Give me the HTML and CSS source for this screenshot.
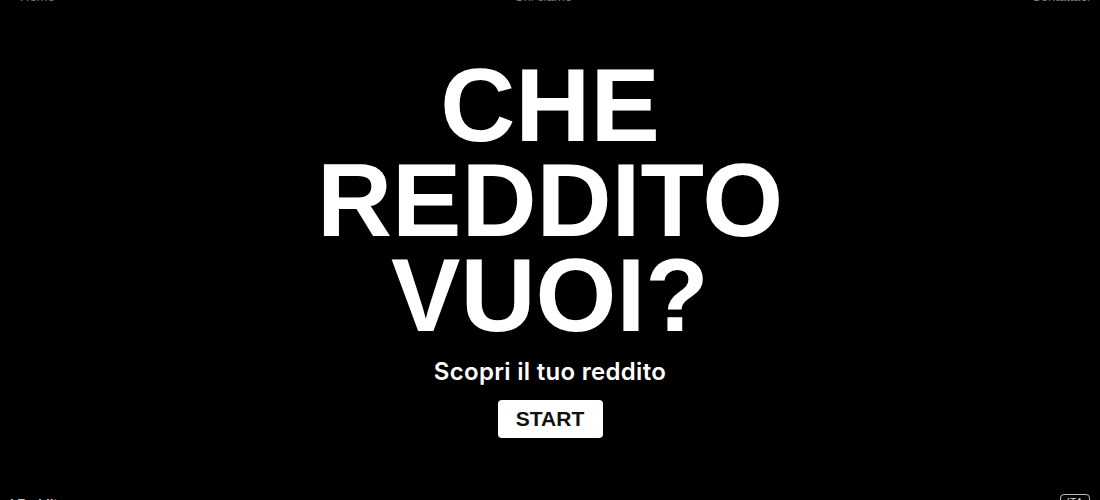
FILE: index.html
```html
<!DOCTYPE html>
<html lang="it">
<head>
<meta charset="utf-8">
<title>Che reddito vuoi?</title>
<link rel="stylesheet" href="styles.css">
</head>
<body>
<div class="page">
  <nav class="topnav">
    <a class="navlink">Home</a>
    <a class="navlink">Chi siamo</a>
    <a class="navlink">Contattaci</a>
  </nav>
  <main class="hero">
    <h1 class="title">CHE<br>REDDITO<br>VUOI?</h1>
    <p class="subtitle">Scopri il tuo reddito</p>
    <button class="start">START</button>
  </main>
  <footer class="foot">
    <span class="foot-text">I Reddito</span>
    <span class="foot-badge">ITA</span>
  </footer>
</div>
</body>
</html>
```

FILE: styles.css
```css
html, body {
  margin: 0;
  padding: 0;
  background: #000;
}
body {
  width: 1100px;
  height: 500px;
  overflow: hidden;
  font-family: "Liberation Sans", Arial, sans-serif;
  color: #fff;
}
.page {
  height: 500px;
  display: flex;
  flex-direction: column;
}
.topnav {
  display: flex;
  justify-content: space-between;
  padding: 0 10px 0 20px;
  height: 14px;
  margin-top: -10px;
}
.navlink {
  font-size: 13px;
  line-height: 14px;
  color: #7a7a7a;
}
.hero {
  flex: 1;
  display: flex;
  flex-direction: column;
  align-items: center;
  padding-top: 54px;
}
.title {
  margin: 0;
  font-size: 104px;
  line-height: 95px;
  font-weight: 700;
  text-align: center;
  letter-spacing: 0;
}
.subtitle {
  margin: 15px 0 0;
  font-family: Inter, "Liberation Sans", sans-serif;
  font-weight: 600;
  font-size: 24px;
  line-height: 28px;
  letter-spacing: 0.3px;
}
.start {
  margin-top: 14px;
  width: 105px;
  height: 38px;
  border: 0;
  border-radius: 4px;
  background: #fff;
  color: #111;
  font-family: "Liberation Sans", Arial, sans-serif;
  font-weight: 700;
  font-size: 21px;
  padding: 0;
}
.foot {
  display: flex;
  justify-content: space-between;
  align-items: flex-start;
  padding: 0 10px;
  height: 10px;
  margin-bottom: -6px;
}
.foot-text {
  font-size: 13px;
  line-height: 14px;
  font-weight: 700;
  color: #ccc;
  margin-top: 1px;
}
.foot-badge {
  font-size: 11px;
  line-height: 14px;
  border: 1px solid #bbb;
  border-radius: 4px;
  padding: 0 6px;
  color: #ccc;
  margin-top: -2px;
}
```
